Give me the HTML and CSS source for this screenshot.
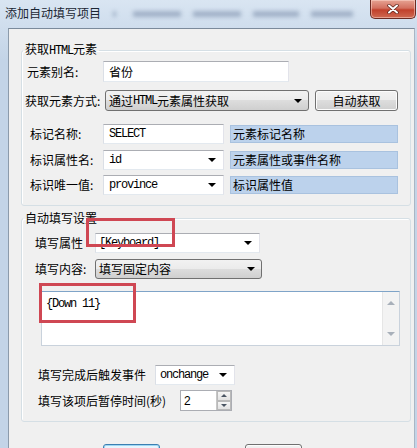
FILE: index.html
```html
<!DOCTYPE html>
<html lang="zh-CN">
<head>
    <meta charset="UTF-8">
    <title>添加自动填写项目</title>
    <link rel="stylesheet" href="styles.css">
</head>
<body>
<div class="window">
    <!--title bar-->
    <div class="titlebar">
        <span class="title">添加自动填写项目</span>
        <span class="smudge s1"></span><span class="smudge s2"></span><span class="smudge s3"></span><span class="smudge s4"></span><span class="smudge s5"></span>
        <span class="close">
            <svg width="12" height="10" viewBox="0 0 12 10"><path d="M2 1.5L10 8.5M10 1.5L2 8.5" stroke="#5a2018" stroke-width="3.4" stroke-linecap="round"/><path d="M2 1.5L10 8.5M10 1.5L2 8.5" stroke="#fff" stroke-width="2" stroke-linecap="round"/></svg>
        </span>
    </div>
    <div class="frame">
        <div class="client">
            <!--获取HTML元素-->
            <fieldset class="group">
                <legend>获取<span class="mono">HTML</span>元素</legend>
                <div class="row r-alias"><span class="lbl">元素别名:</span><span class="edit alias">省份</span></div>
                <div class="row r-way">
                    <span class="lbl">获取元素方式:</span>
                    <span class="dropdown way">通过<span class="mono">HTML</span>元素属性获取<i class="arrow"></i></span>
                    <span class="btn get">自动获取</span>
                </div>
                <div class="row r-tag">
                    <span class="lbl">标记名称:</span>
                    <span class="edit short mono">SELECT</span>
                    <span class="hint">元素标记名称</span>
                </div>
                <div class="row r-attr">
                    <span class="lbl">标识属性名:</span>
                    <span class="edit combo short"><span class="mono">id</span><i class="arrow"></i></span>
                    <span class="hint">元素属性或事件名称</span>
                </div>
                <div class="row r-uid">
                    <span class="lbl">标识唯一值:</span>
                    <span class="edit combo short"><span class="mono">province</span><i class="arrow"></i></span>
                    <span class="hint">标识属性值</span>
                </div>
            </fieldset>
            <!--自动填写设置-->
            <fieldset class="group fill">
                <legend>自动填写设置</legend>
                <div class="row r-prop">
                    <span class="lbl">填写属性</span>
                    <span class="edit combo prop"><span class="mono">[Keyboard]</span><i class="arrow"></i></span>
                </div>
                <div class="row r-content">
                    <span class="lbl">填写内容:</span>
                    <span class="dropdown content">填写固定内容<i class="arrow"></i></span>
                </div>
                <div class="memo">
                    <span class="memo_text mono">{Down 11}</span>
                    <span class="scrollbar"><i class="sb_up"></i><i class="sb_down"></i></span>
                </div>
                <div class="row r-event">
                    <span class="lbl">填写完成后触发事件</span>
                    <span class="edit combo event"><span class="mono">onchange</span><i class="arrow"></i></span>
                </div>
                <div class="row r-pause">
                    <span class="lbl">填写该项后暂停时间(秒)</span>
                    <span class="edit spin"><span class="num">2</span><span class="spin_btns"><i class="up"></i><i class="down"></i></span></span>
                </div>
            </fieldset>
            <div class="actions">
                <span class="btn ok focus">修改</span>
                <span class="btn cancel">取消</span>
            </div>
        </div>
    </div>
    <!--annotation marks-->
    <span class="mark mark1"></span>
    <span class="mark mark2"></span>
</div>
</body>
</html>
```

FILE: styles.css
```css
/*Initialization style*/
*{box-sizing:border-box;}
html,body{margin:0;padding:0;}
body{width:417px;height:448px;overflow:hidden;background:#c5d6e8;font:12px/16px "Noto Sans CJK SC","Noto Sans",sans-serif;color:#000;}
i{display:block;}
.mono{font-family:"Liberation Mono",monospace;font-size:12px;letter-spacing:-1.2px;}

/*window*/
.window{position:relative;width:417px;height:448px;display:flex;flex-direction:column;background:linear-gradient(#d9e5f2,#c3d4e7 60px,#c3d4e7);}
.titlebar{flex:none;height:28px;display:flex;align-items:flex-start;padding:0 1px 0 5px;}
.title{margin-top:5px;color:#1b2633;}
.smudge{height:6px;margin-top:11px;background:#6f82a0;filter:blur(2px);opacity:.5;}
.s1{width:3px;margin-left:12px;}
.s2{width:48px;margin-left:17px;}
.s3{width:48px;margin-left:12px;}
.s4{width:46px;margin-left:12px;}
.s5{width:42px;margin-left:12px;}
.close{margin-left:auto;width:46px;height:19px;display:flex;align-items:center;justify-content:center;border:1px solid #6b2b23;border-top:0;border-radius:0 0 5px 5px;background:linear-gradient(#e6a393,#d3705f 45%,#c1412c 55%,#cf6a52);box-shadow:inset 0 0 0 1px rgba(255,220,210,.5);}
.frame{flex:1;display:flex;padding:0 2px 0 8px;}
.client{flex:1;background:#f0f0f0;border-top:1px solid #7b8a9b;border-left:1px solid #8c9bab;border-right:1px solid #a9b6c4;}

/*group box*/
.group{margin:12px 3px 0 12px;padding:0 0 10px;border:1px solid #d5dfe5;border-radius:3px;min-width:0;box-shadow:inset 1px 1px #fff;}
.group legend{padding:0 2px;margin-left:1px;line-height:16px;}
.group.fill{margin-top:4px;}
.row{display:flex;align-items:center;}
.lbl{flex:none;white-space:nowrap;}

/*controls*/
.edit{flex:none;display:flex;align-items:center;padding-left:5px;background:#fff;border:1px solid;border-color:#abadb3 #e2e3ea #e3e9ef #dbdfe6;white-space:nowrap;}
.dropdown{flex:none;display:flex;align-items:center;padding-left:3px;border:1px solid #707070;border-radius:3px;background:linear-gradient(#f2f2f2,#ebebeb 50%,#dddddd 50%,#cfcfcf);white-space:nowrap;}
.arrow{margin-left:auto;margin-right:6px;width:0;height:0;border-left:4px solid transparent;border-right:4px solid transparent;border-top:4px solid #000;}
.combo .arrow{margin-right:7px;}
.btn{flex:none;display:flex;align-items:center;justify-content:center;border:1px solid #707070;border-radius:3px;background:linear-gradient(#f2f2f2,#ebebeb 50%,#dddddd 50%,#cfcfcf);box-shadow:inset 0 0 0 1px #fcfcfc;}
.hint{flex:none;display:flex;align-items:center;margin-left:6px;width:168px;height:18px;padding-left:2px;background:#bcd2ec;border:1px solid #a9c2df;}

/*group 1 rows*/
.r-alias{margin-top:2px;height:21px;padding-left:5px;}
.r-alias .lbl{width:76px;}
.alias{width:186px;height:21px;}
.r-way{margin-top:8px;height:21px;padding-left:3px;}
.r-way .lbl{width:80px;}
.way{width:204px;height:21px;}
.get{margin-left:6px;width:83px;height:21px;}
.r-tag{margin-top:13px;height:20px;padding-left:8px;}
.r-attr{margin-top:6px;height:20px;padding-left:8px;}
.r-uid{margin-top:5px;height:20px;padding-left:8px;}
.r-tag .lbl,.r-attr .lbl,.r-uid .lbl{width:73px;}
.short{width:121px;height:20px;}

/*group 2 rows*/
.r-prop{margin-top:7px;height:20px;padding-left:13px;}
.r-content{margin-top:6px;height:20px;padding-left:13px;}
.r-prop .lbl,.r-content .lbl{width:60px;}
.prop{width:165px;height:20px;padding-left:3px;}
.content{width:167px;height:20px;}
.memo{display:flex;margin:12px 0 0 19px;width:359px;height:55px;background:#fff;border:1px solid #c9d2dc;border-top-color:#7fa4c8;}
.memo_text{flex:1;padding:4px 0 0 4px;}
.scrollbar{flex:none;width:17px;display:flex;flex-direction:column;justify-content:space-between;align-items:center;padding:9px 0 9px;background:#f3f3f3;border-left:1px solid #e6e6e6;}
.sb_up{width:0;height:0;border-left:4px solid transparent;border-right:4px solid transparent;border-bottom:4px solid #a8b0ba;}
.sb_down{width:0;height:0;border-left:4px solid transparent;border-right:4px solid transparent;border-top:4px solid #a8b0ba;}
.r-event{margin-top:19px;height:20px;padding-left:16px;}
.r-event .lbl{width:117px;}
.event{width:80px;height:20px;padding-left:4px;}
.r-pause{margin-top:5px;height:21px;padding-left:16px;}
.r-pause .lbl{width:142px;}
.spin{width:52px;height:21px;padding-left:3px;border-color:#abadb3;}
.num{font-family:"Liberation Sans",sans-serif;font-size:12px;}
.spin_btns{margin-left:auto;width:15px;height:19px;display:flex;flex-direction:column;border-left:1px solid #c7c7c7;}
.spin_btns i{flex:1;display:flex;align-items:center;justify-content:center;background:linear-gradient(#f6f6f6,#e2e2e2);border:1px solid #b9b9b9;}
.spin_btns .up:after{content:"";border-left:3px solid transparent;border-right:3px solid transparent;border-bottom:3px solid #4a5563;}
.spin_btns .down:after{content:"";border-left:3px solid transparent;border-right:3px solid transparent;border-top:3px solid #4a5563;}

/*buttons*/
.actions{display:flex;padding-left:94px;margin-top:22px;}
.actions .btn{width:57px;height:23px;}
.actions .cancel{margin-left:85px;}
.btn.focus{border-color:#3c7fb1;box-shadow:inset 0 0 0 1px #9ed7f5;background:linear-gradient(#eaf6fd,#d9f0fc 50%,#bee6fd 50%,#a7d9f5);}

/*annotation marks*/
.mark{position:absolute;border:3px solid #cf4753;}
.mark1{left:86px;top:218px;width:89px;height:29px;}
.mark2{left:39px;top:283px;width:97px;height:40px;}
```
